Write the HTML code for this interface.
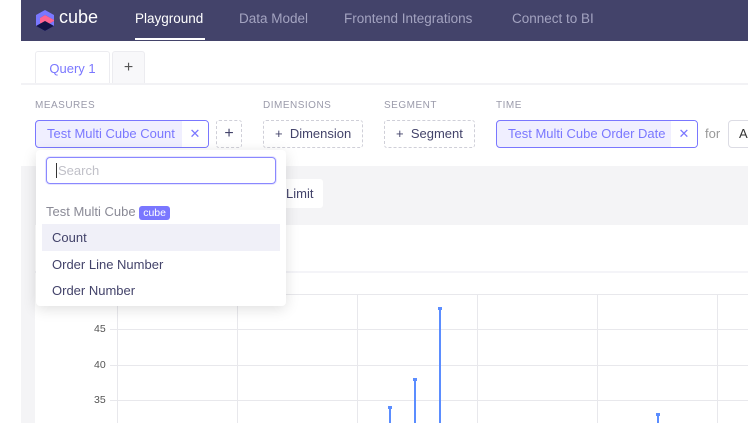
<!DOCTYPE html>
<html><head><style>
*{box-sizing:border-box;margin:0;padding:0}
body{width:748px;height:423px;overflow:hidden;background:#fff;font-family:"Liberation Sans",sans-serif;position:relative}
.a{position:absolute}
.hdr{left:21px;top:0;width:727px;height:41px;background:#43436a}
.nav{top:11px;font-size:13.5px;color:#a3a3c0}
.lbl{top:100px;font-size:10px;color:#9a9aaa;letter-spacing:.5px}
.pill{top:120px;height:28px;border:1px solid #7a77ff;border-radius:4px;background:#f0efff;color:#7a77ff;font-size:13px;line-height:26px;padding-left:11px}
.dash{top:120px;height:28px;border:1px dashed #cfcfd8;border-radius:3px;font-size:13px;color:#43436a;line-height:26px;padding-left:11px}
.gl{background:#e8e8ec}
.bar{background:#5b8dff;width:2px}
.bar:before{content:"";position:absolute;left:-1px;top:-1px;width:4px;height:3px;background:#5b8dff}
</style></head><body>
<div class="a hdr"></div>
<svg class="a" style="left:34px;top:9px" width="22" height="23" viewBox="0 0 22 23"><path d="M11 1L20 6V11L11 6L6 9V14L11 17L20 12V17L11 22L2 17V6Z" fill="#7a77ff"/><path d="M11 6L20 11V12L11 17L6 14V9Z" fill="#ff6492"/><path d="M2 17L11 22L20 17L11 12Z" fill="#141446"/></svg>
<div class="a" style="left:59px;top:7px;font-size:18px;color:#fff">cube</div>
<div class="a nav" style="left:135px;color:#fff">Playground</div>
<div class="a" style="left:135px;top:38px;width:70px;height:2px;background:#fff"></div>
<div class="a nav" style="left:239px">Data Model</div>
<div class="a nav" style="left:344px">Frontend Integrations</div>
<div class="a nav" style="left:512px">Connect to BI</div>
<div class="a" style="left:35px;top:51px;width:75px;height:34px;border:1px solid #ececf0;border-bottom:none;border-radius:3px 3px 0 0;color:#7a77ff;font-size:13px;line-height:33px;text-align:center">Query 1</div>
<div class="a" style="left:112px;top:51px;width:33px;height:33px;border:1px solid #ececf0;background:#f8f8fa;border-radius:3px 3px 0 0;color:#555;font-size:16px;line-height:31px;text-align:center">+</div>
<div class="a" style="left:21px;top:83px;width:727px;height:2px;background:#f2f2f5"></div>
<div class="a lbl" style="left:35px">MEASURES</div>
<div class="a lbl" style="left:263px">DIMENSIONS</div>
<div class="a lbl" style="left:384px">SEGMENT</div>
<div class="a lbl" style="left:496px">TIME</div>
<div class="a pill" style="left:35px;width:174px">Test Multi Cube Count<span class="a" style="right:0;top:0;width:26px;height:26px;background:#fff;text-align:center;border-radius:0 3px 3px 0">✕</span></div>
<div class="a dash" style="left:216px;width:26px;padding:0;text-align:center;font-size:16px">+</div>
<div class="a dash" style="left:263px;width:100px">+&nbsp; Dimension</div>
<div class="a dash" style="left:384px;width:91px">+&nbsp; Segment</div>
<div class="a pill" style="left:496px;width:202px">Test Multi Cube Order Date<span class="a" style="right:0;top:0;width:26px;height:26px;background:#fff;text-align:center;border-radius:0 3px 3px 0">✕</span></div>
<div class="a" style="left:705px;top:126px;font-size:13px;color:#999">for</div>
<div class="a" style="left:728px;top:120px;width:30px;height:28px;border:1px solid #dcdce4;border-radius:4px;font-size:13px;line-height:26px;padding-left:10px;color:#333">Al</div>
<div class="a" style="left:21px;top:166px;width:727px;height:59px;background:#f4f4f6"></div>
<div class="a" style="left:21px;top:225px;width:14px;height:198px;background:#f4f4f6"></div>
<div class="a" style="left:275px;top:179px;width:48px;height:29px;background:#fff;border-radius:3px;font-size:13px;color:#43436a;line-height:29px;padding-left:11px">Limit</div>
<div class="a" style="left:35px;top:271px;width:713px;height:2px;background:#f4f4f8"></div>
<div class="a gl" style="left:117px;top:294px;width:631px;height:1px"></div>
<div class="a gl" style="left:110px;top:329px;width:638px;height:1px"></div>
<div class="a gl" style="left:110px;top:365px;width:638px;height:1px"></div>
<div class="a gl" style="left:110px;top:400px;width:638px;height:1px"></div>
<div class="a gl" style="left:117px;top:294px;width:1px;height:129px"></div>
<div class="a gl" style="left:237px;top:294px;width:1px;height:129px"></div>
<div class="a gl" style="left:357px;top:294px;width:1px;height:129px"></div>
<div class="a gl" style="left:477px;top:294px;width:1px;height:129px"></div>
<div class="a gl" style="left:597px;top:294px;width:1px;height:129px"></div>
<div class="a gl" style="left:717px;top:294px;width:1px;height:129px"></div>
<div class="a" style="left:94px;top:323px;font-size:10.5px;color:#555">45</div>
<div class="a" style="left:94px;top:359px;font-size:10.5px;color:#555">40</div>
<div class="a" style="left:94px;top:394px;font-size:10.5px;color:#555">35</div>
<div class="a bar" style="left:389px;top:407px;height:16px"></div>
<div class="a bar" style="left:414px;top:379px;height:44px"></div>
<div class="a bar" style="left:439px;top:308px;height:115px"></div>
<div class="a bar" style="left:657px;top:414px;height:9px"></div>
<div class="a" style="left:36px;top:150px;width:250px;height:156px;background:#fff;border-radius:4px;box-shadow:0 3px 14px rgba(0,0,0,.13)"></div>
<div class="a" style="left:46px;top:157px;width:230px;height:27px;border:1px solid #8a88ff;border-radius:4px;box-shadow:0 0 0 1px #e6e5ff;font-size:13px;color:#c0c0c8;line-height:25px;padding-left:9px"><span style="border-left:1px solid #333;margin-right:1px"></span>Search</div>
<div class="a" style="left:46px;top:204px;font-size:13px;color:#8a8a96">Test Multi Cube <span style="background:#7a77ff;color:#fff;font-size:10.5px;padding:1px 4px;border-radius:3px">cube</span></div>
<div class="a" style="left:42px;top:224px;width:238px;height:27px;background:#f0f0f8"></div>
<div class="a" style="left:52px;top:230px;font-size:13px;color:#43436a">Count</div>
<div class="a" style="left:52px;top:257px;font-size:13px;color:#43436a">Order Line Number</div>
<div class="a" style="left:52px;top:283px;font-size:13px;color:#43436a">Order Number</div>
</body></html>
